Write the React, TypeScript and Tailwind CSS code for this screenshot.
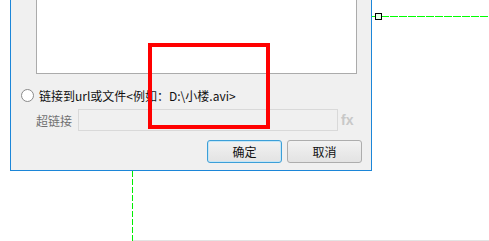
import React from "react";

const font = { fontFamily: '"Noto Sans CJK SC", "Open Sans", sans-serif' };

export default function App() {
  return (
    <div className="relative w-[489px] h-[241px] bg-white overflow-hidden" style={font}>
      {/* dialog window */}
      <div className="absolute left-[10px] top-0 w-[362px] h-[171px] bg-[#f0f0f0] border-x border-b border-[#1c86d8] flex flex-col">
        <div className="ml-[25px] mr-[14px] h-[74px] bg-white border-x border-b border-[#ababab]" />
        <div className="mt-[14px] ml-[10px] flex items-center h-[15px]">
          <span className="w-[13px] h-[13px] rounded-full border border-[#8a8a8a] bg-white" />
          <span className="ml-[5px] text-[12px] leading-[15px] text-[#111]">链接到url或文件&lt;例如：D:\小楼.avi&gt;</span>
        </div>
        <div className="mt-[6px] ml-[25px] flex items-center h-[22px]">
          <span className="w-[42px] text-[12px] text-[#707070] leading-[15px]">超链接</span>
          <div className="w-[260px] h-[22px] border border-[#d9d9d9] bg-[#f0f0f0]" />
          <span className="ml-[3px] text-[14px] font-bold text-[#c8c8c8] leading-[15px]" style={{ fontFamily: '"Liberation Sans", sans-serif' }}>fx</span>
        </div>
        <div className="mt-[9px] mr-[9px] flex justify-end gap-[5px]">
          <button className="w-[75px] h-[23px] rounded-[3px] border border-[#3c9fd8] bg-gradient-to-b from-[#f2f2f2] to-[#e3e3e3] text-[12px] text-[#111] leading-[15px] shadow-[inset_0_0_0_1px_#c5e6f6]">确定</button>
          <button className="w-[75px] h-[23px] rounded-[3px] border border-[#adadad] bg-gradient-to-b from-[#f2f2f2] to-[#e3e3e3] text-[12px] text-[#111] leading-[15px]">取消</button>
        </div>
      </div>

      {/* connector lines */}
      <svg className="absolute left-0 top-0" width="489" height="241">
        <line x1="372" y1="16.5" x2="489" y2="16.5" stroke="#00ff00" strokeWidth="1" strokeDasharray="8 1" />
        <line x1="132.5" y1="171" x2="132.5" y2="241" stroke="#00ee00" strokeWidth="1" strokeDasharray="6 2" />
        <line x1="133" y1="240.5" x2="489" y2="240.5" stroke="#e3e3e3" strokeWidth="1" />
        <rect x="375.5" y="13.5" width="6" height="6" fill="#e6ffe6" stroke="#000" strokeWidth="1" />
      </svg>

      {/* red highlight */}
      <div className="absolute left-[148px] top-[43px] w-[122px] h-[86px] border-[4px] border-[#ff0000]" />
    </div>
  );
}
